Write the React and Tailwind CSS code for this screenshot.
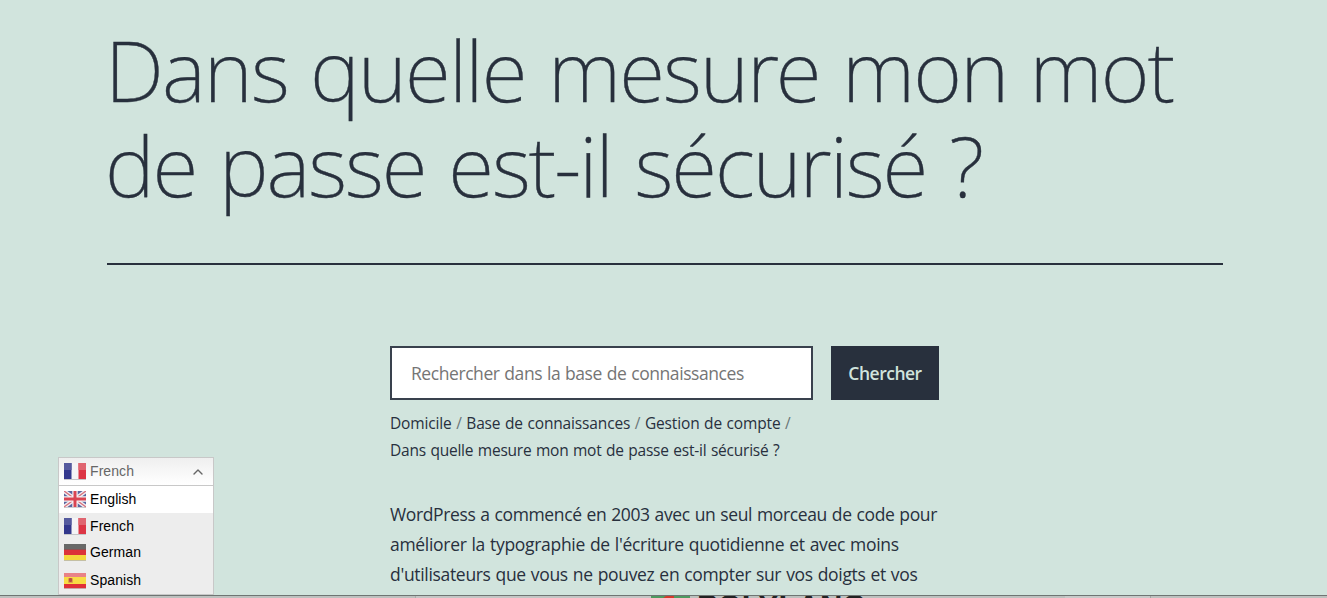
import { ChevronUp } from "lucide-react";

const FrenchFlag = () => (
  <svg viewBox="0 0 22 17" className="h-[17px] w-[22px] shrink-0">
    <rect width="22" height="17" fill="#f4f4f6" />
    <rect width="7.5" height="16" fill="#32378c" />
    <rect width="7.5" height="7" fill="#555a9e" />
    <rect x="14.5" width="7.5" height="16" fill="#dc3545" />
    <rect x="14.5" width="7.5" height="7" fill="#e06570" />
    <rect y="16" width="22" height="1" fill="#b9b9bd" fillOpacity=".8" />
  </svg>
);

const EnglishFlag = () => (
  <svg viewBox="0 0 22 17" className="h-[17px] w-[22px] shrink-0">
    <rect width="22" height="16" fill="#5a659f" />
    <path d="M0 0L22 16M22 0L0 16" stroke="#f0eef2" strokeWidth="4" />
    <path d="M0 0L22 16M22 0L0 16" stroke="#d8707c" strokeWidth="1.4" />
    <path d="M11 0V16M0 8H22" stroke="#f4f2f4" strokeWidth="5.4" />
    <path d="M11 0V16M0 8H22" stroke="#d94452" strokeWidth="3" />
    <rect y="16" width="22" height="1" fill="#b9b9bd" fillOpacity=".7" />
  </svg>
);

const GermanFlag = () => (
  <svg viewBox="0 0 22 17" className="h-[17px] w-[22px] shrink-0">
    <rect width="22" height="6" fill="#686868" />
    <rect y="5" width="22" height="1" fill="#8d5052" />
    <rect y="6" width="22" height="5" fill="#dc3338" />
    <rect y="11" width="22" height="5" fill="#f4d73c" />
    <rect y="16" width="22" height="1" fill="#c4bfa4" />
  </svg>
);

const SpanishFlag = () => (
  <svg viewBox="0 0 22 17" className="h-[17px] w-[22px] shrink-0">
    <rect y="1" width="22" height="4" fill="#e98287" />
    <rect y="5" width="22" height="7" fill="#f8dc45" />
    <rect y="12" width="22" height="4" fill="#e03038" />
    <rect x="4" y="6" width="5" height="5" rx="1" fill="#dfa04a" />
    <rect x="5" y="6" width="3" height="4" rx="1" fill="#b94c41" />
    <rect y="16" width="22" height="1" fill="#c9a5a7" />
  </svg>
);

const languages = [
  { name: "English", Flag: EnglishFlag, row: "h-[27px] bg-white" },
  { name: "French", Flag: FrenchFlag, row: "h-[27px]" },
  { name: "German", Flag: GermanFlag, row: "h-[25px]" },
  { name: "Spanish", Flag: SpanishFlag, row: "h-[30px]" },
];

const LanguageSwitcher = () => (
  <div className="absolute left-[58px] top-[457px] h-[138px] w-[156px] border border-[#c8c8c8] bg-[#ededed] font-['Liberation_Sans',Arial,sans-serif] text-[14px] font-normal tracking-[0.08px] text-black">
    <button
      type="button"
      className="flex h-[28px] w-full items-center gap-1 border-b border-[#c8c8c8] bg-linear-to-b from-[#efefef] to-white pl-[5px] pr-[7px] text-[#666]"
    >
      <FrenchFlag />
      <span>French</span>
      <ChevronUp size={16} strokeWidth={2.1} className="ml-auto" />
    </button>
    <ul>
      {languages.map(({ name, Flag, row }) => (
        <li key={name} className={`flex items-center gap-1 pl-[5px] ${row}`}>
          <Flag />
          <span>{name}</span>
        </li>
      ))}
    </ul>
  </div>
);

const SearchForm = () => (
  <form className="flex gap-[18px]">
    <input
      type="text"
      placeholder="Rechercher dans la base de connaissances"
      className="h-[54px] w-[423px] border-2 border-[#39414d] bg-white px-[19px] text-[17.5px] tracking-[-0.43px] [word-spacing:0.7px] placeholder:text-[#757575]"
    />
    <button
      type="button"
      className="h-[54px] w-[108px] bg-[#28303d] text-[17.5px] font-semibold tracking-[-0.5px] text-[#d1e4dd]"
    >
      Chercher
    </button>
  </form>
);

const Breadcrumbs = () => (
  <nav className="mt-[10px] whitespace-nowrap text-[15.5px] leading-[27px] [word-spacing:0.7px]">
    <div className="tracking-[-0.15px]">
      Domicile <span className="text-[#6b7678]">/</span> Base de connaissances{" "}
      <span className="text-[#6b7678]">/</span> Gestion de compte{" "}
      <span className="text-[#6b7678]">/</span>
    </div>
    <div className="tracking-[-0.22px]">
      Dans quelle mesure mon mot de passe est-il sécurisé ?
    </div>
  </nav>
);

const App = () => {
  return (
    <div className="relative flex h-[598px] w-[1327px] flex-col overflow-hidden bg-[#d1e4dd] font-['Open_Sans','Noto_Sans',sans-serif] text-[#28303d]">
      <main className="h-[595px] shrink-0 overflow-hidden">
        <header className="ml-[107px] h-[265px] w-[1116px] border-b-2 border-[#28303d] pt-[22px]">
          <h1 className="whitespace-nowrap font-['Noto_Sans','Open_Sans',sans-serif] text-[84px] font-extralight leading-[95px] [-webkit-text-stroke:0.4px_#28303d]">
            <span className="-ml-[2px] block tracking-[-1.85px] [word-spacing:2.4px]">Dans quelle mesure mon mot</span>
            <span className="-ml-[2px] block tracking-[-2.05px] [word-spacing:3px]">de passe est-il sécurisé ?</span>
          </h1>
        </header>

        <article className="ml-[390px] mt-[81px] w-[600px]">
          <SearchForm />
          <Breadcrumbs />
          <p className="mt-[35px] whitespace-nowrap text-[17.5px] leading-[30px] [word-spacing:0.7px]">
            <span className="block tracking-[-0.37px]">WordPress a commencé en 2003 avec un seul morceau de code pour</span>
            <span className="block tracking-[-0.3px]">améliorer la typographie de l'écriture quotidienne et avec moins</span>
            <span className="block tracking-[-0.32px]">d'utilisateurs que vous ne pouvez en compter sur vos doigts et vos</span>
          </p>
        </article>
      </main>

      <footer className="flex h-[3px] items-start overflow-hidden border-t border-[#6f7573] bg-[#bdc1bf]">
        <div className="ml-[415px] h-[2px] w-[236px] border-l border-[#a9adab] bg-[#c4c6c5]" />
        <svg viewBox="0 0 39 2" className="h-[2px] w-[39px] shrink-0">
          <rect width="39" height="2" fill="#4e9a60" />
          <path d="M12 2L15 0H23V2Z" fill="#d33a2c" />
        </svg>
        <span className="ml-[7px] h-[2px] w-[168px] overflow-hidden font-['Liberation_Sans',Arial,sans-serif] text-[31px] font-bold leading-[22px] text-[#222]">
          POLYLANG
        </span>
        <div className="ml-[200px] h-[2px] w-[86px] border-r border-[#a0a4a2] bg-[#c8cac9]" />
      </footer>

      <LanguageSwitcher />
    </div>
  );
};

export default App;
